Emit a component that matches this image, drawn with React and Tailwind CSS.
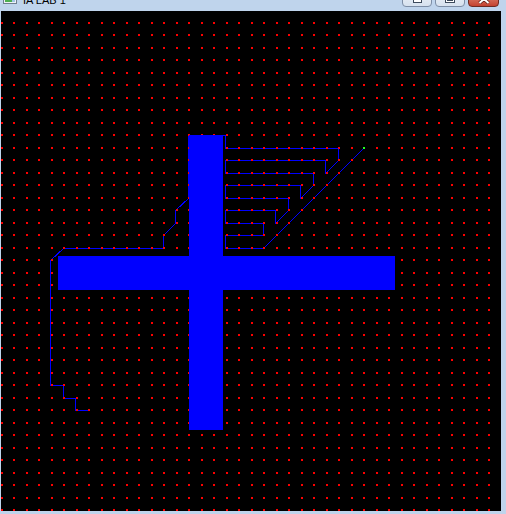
import React from "react";

// grid: 12.5px cells on a 500x500 canvas
const gx = (i) => Math.round(12.5 * i) - 0.5;
const gy = (j) => Math.round(12.5 * j) - 0.5;

const PATH = [
  [29, 11], [21, 19], [18, 19], [18, 18], [21, 18], [21, 17], [18, 17], [18, 16],
  [22, 16], [22, 17], [23, 16], [23, 15], [18, 15], [18, 14], [24, 14], [24, 15],
  [25, 14], [25, 13], [18, 13], [18, 12], [26, 12], [26, 13], [27, 12], [27, 11],
  [18, 11], [18, 10], [15, 10], [15, 15], [14, 16], [14, 17], [13, 18], [13, 19],
  [5, 19], [4, 20], [4, 30], [5, 30], [5, 31], [6, 31], [6, 32], [7, 32],
];

function Dots() {
  const dots = [];
  for (let i = 0; i < 40; i++) {
    for (let j = 0; j <= 40; j++) {
      dots.push(
        <rect
          key={i + "-" + j}
          x={Math.round(12.5 * i - 0.5)}
          y={Math.round(12.5 * j) - 2}
          width="2"
          height="2"
          fill="#ff0000"
        />
      );
    }
  }
  return <g>{dots}</g>;
}

function Board() {
  const pts = PATH.map(([i, j]) => gx(i) + "," + gy(j)).join(" ");
  return (
    <svg width="500" height="500" viewBox="0 0 500 500" shapeRendering="crispEdges">
      <rect width="500" height="500" fill="#000" />
      <polyline points={pts} fill="none" stroke="#0000ff" strokeWidth="1" />
      <Dots />
      <rect x="188" y="124" width="34" height="295" fill="#0000ff" />
      <rect x="57" y="245" width="337" height="34" fill="#0000ff" />
      <rect x="362" y="136" width="2" height="2" fill="#22ff22" />
    </svg>
  );
}

function CaptionButton({ w, close, children }) {
  return (
    <div
      className={
        "h-[20px] flex items-end justify-center rounded-b-[4px] border " +
        (close
          ? "border-[#6e2a22] bg-gradient-to-b from-[#e8a493] to-[#c4412f]"
          : "border-[#7d8ea6] bg-gradient-to-b from-[#f4f7fb] to-[#d6e1ee]")
      }
      style={{ width: w }}
    >
      {children}
    </div>
  );
}

export default function App() {
  return (
    <div
      className="w-[506px] h-[514px] bg-[#bfd4ec] flex flex-col overflow-hidden"
      style={{ fontFamily: '"Liberation Sans", Arial, sans-serif' }}
    >
      <div className="h-[11px] overflow-hidden shrink-0">
        <div className="h-[30px] -mt-[19px] flex items-start pl-[3px] pr-[7px]">
          <svg className="mt-[7px]" width="14" height="16" viewBox="0 0 14 16">
            <rect x="0.5" y="0.5" width="13" height="15" fill="#eef2f6" stroke="#6f7f90" />
            <rect x="2" y="9" width="7" height="5" fill="#4caf50" />
            <rect x="9" y="9" width="3" height="5" fill="#9fc6e6" />
          </svg>
          <span className="ml-[6px] mt-[13px] text-[11px] leading-[13px] text-black">IA LAB 1</span>
          <div className="ml-auto mt-[6px] flex gap-[3px]">
            <CaptionButton w={30}>
              <div className="mb-[3px] w-[9px] h-[4px] bg-white border border-[#3c4a5c]" />
            </CaptionButton>
            <CaptionButton w={30}>
              <div className="mb-[3px] w-[10px] h-[8px] bg-white border border-[#3c4a5c] flex items-center justify-center">
                <div className="w-[6px] h-[3px] bg-[#dfe7f1] border border-[#3c4a5c]" />
              </div>
            </CaptionButton>
            <CaptionButton w={31} close>
              <svg className="mb-[2px]" width="12" height="10" viewBox="0 0 12 10">
                <path d="M1.5 1 L10.5 9 M10.5 1 L1.5 9" stroke="#5a1a12" strokeWidth="3.4" />
                <path d="M1.5 1 L10.5 9 M10.5 1 L1.5 9" stroke="#ffffff" strokeWidth="2" />
              </svg>
            </CaptionButton>
          </div>
        </div>
      </div>
      <div className="flex">
        <div className="w-[1px] shrink-0" />
        <div className="w-[500px] h-[500px] shrink-0 overflow-hidden bg-black">
          <Board />
        </div>
      </div>
    </div>
  );
}
